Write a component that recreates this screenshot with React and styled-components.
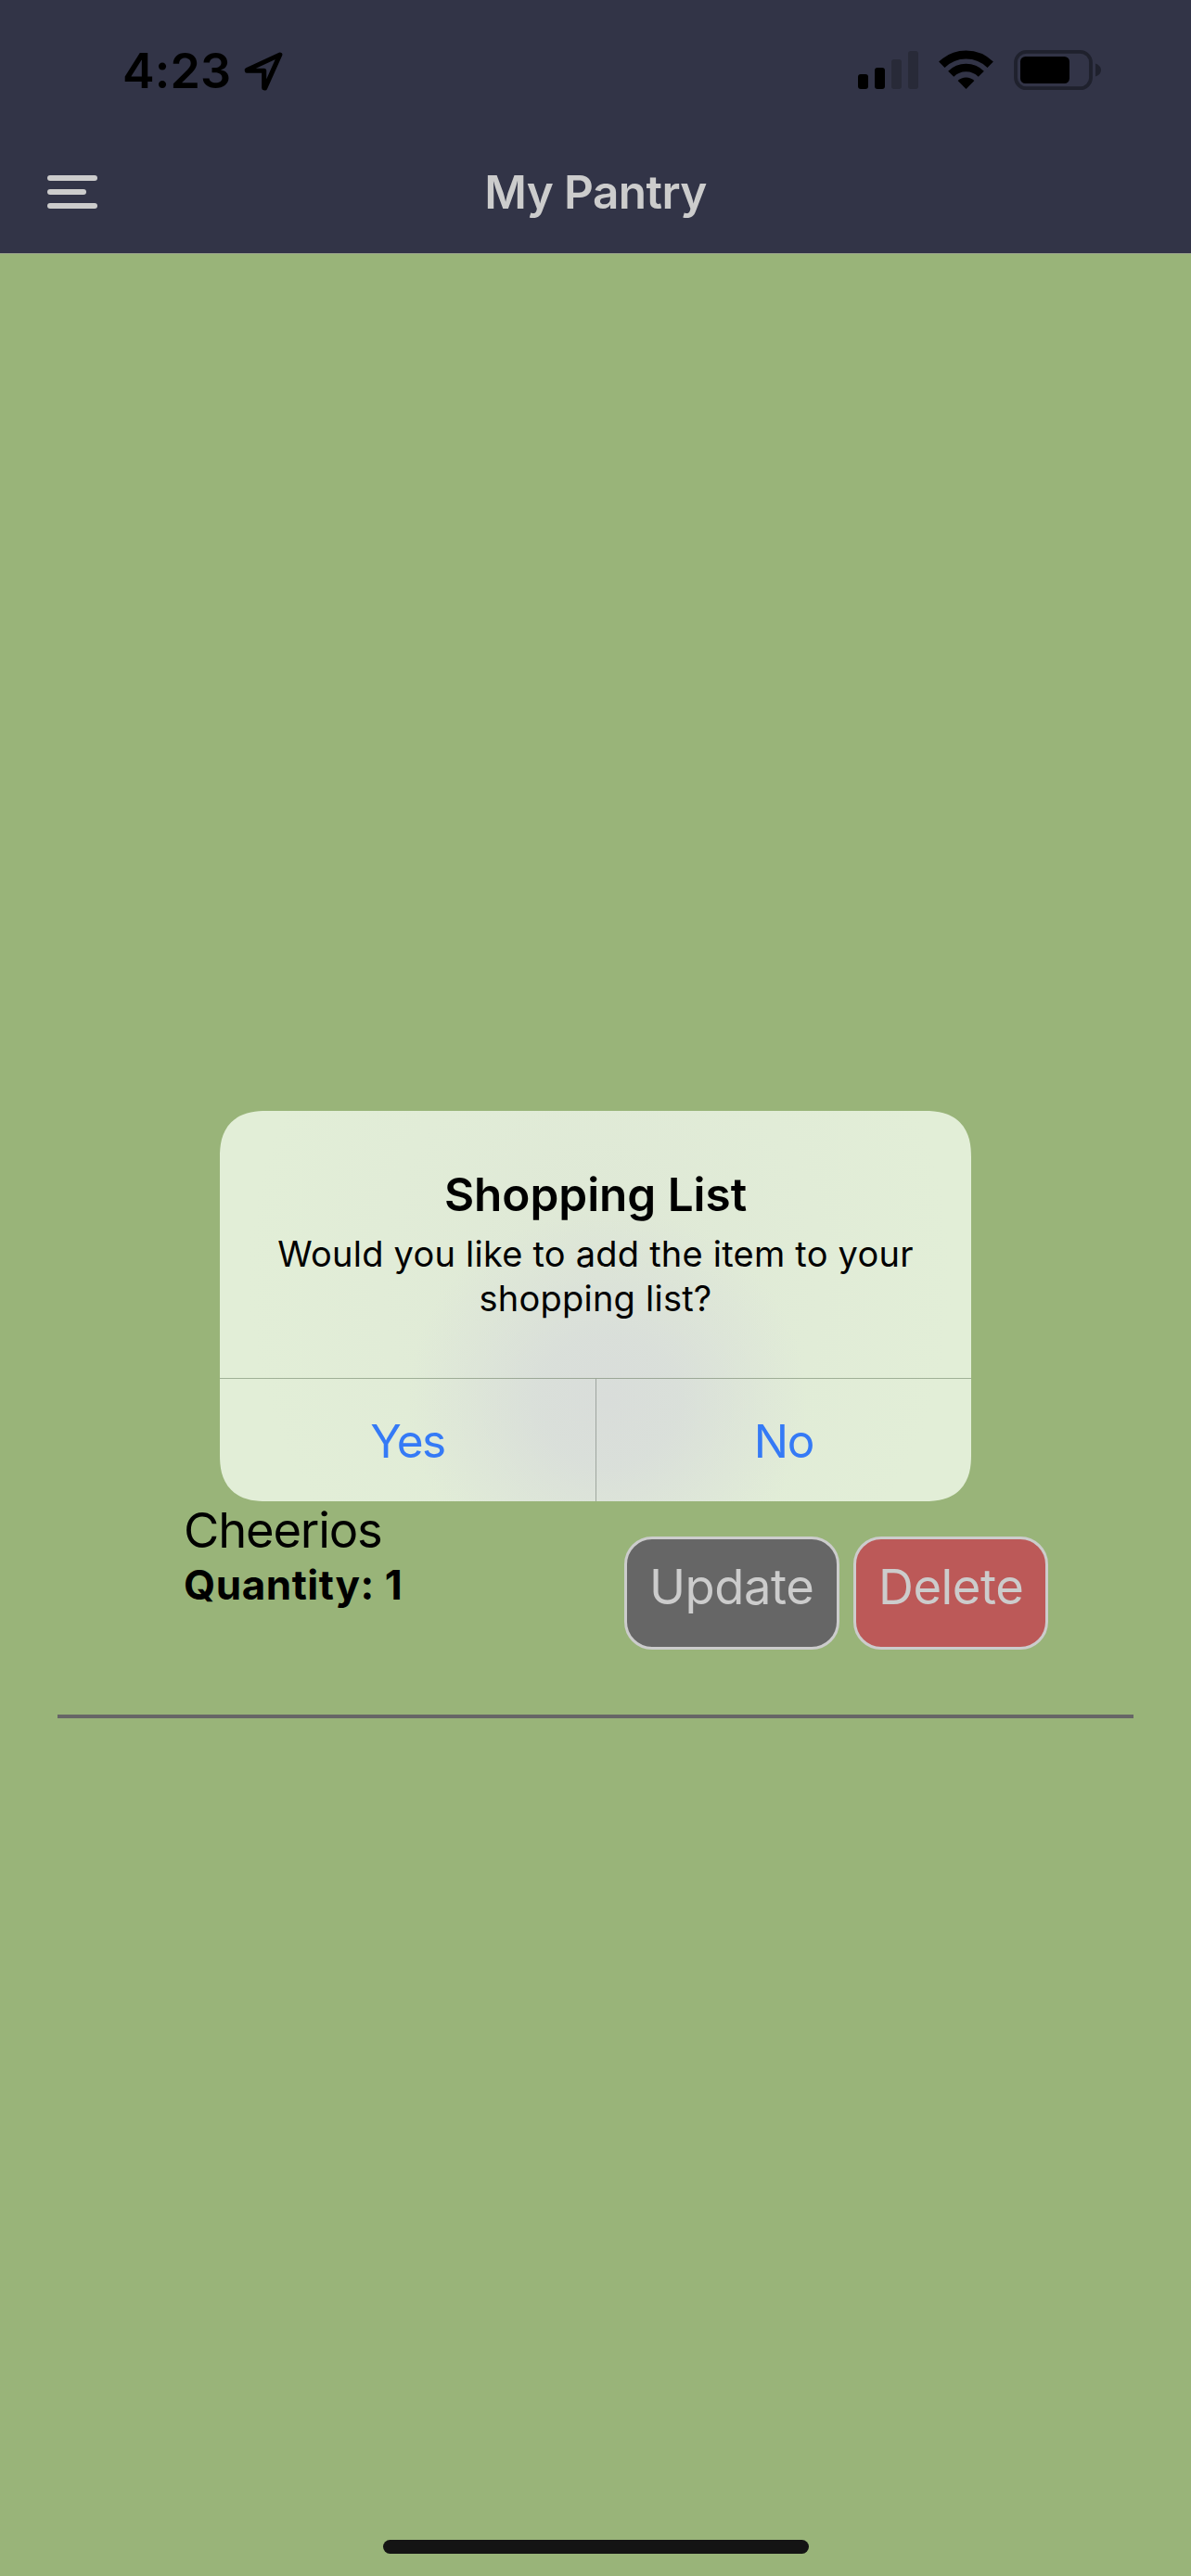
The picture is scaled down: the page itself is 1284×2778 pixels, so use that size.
import React from "react";
import styled, { createGlobalStyle } from "styled-components";

const GlobalStyle = createGlobalStyle`
  * { box-sizing: border-box; }
  body {
    margin: 0;
    background: #99b479;
    font-family: Inter, "Liberation Sans", sans-serif;
    color: #000;
  }
`;

const Screen = styled.div`
  position: relative;
  display: flex;
  flex-direction: column;
  width: 1284px;
  height: 2778px;
  overflow: hidden;
  background: #99b479;
`;

const TopArea = styled.header`
  background: #323447;
  border-bottom: 1px solid #9ca68d;
`;

const StatusBar = styled.div`
  display: flex;
  align-items: center;
  justify-content: space-between;
  height: 141px;
  padding: 13px 96px 0 132px;
`;

const StatusGroup = styled.div`
  display: flex;
  align-items: center;
  gap: ${(p) => p.$gap}px;
`;

const Clock = styled.time`
  width: 118px;
  font-size: 52px;
  font-weight: 600;
  line-height: 46px;
  letter-spacing: 0.1px;
  white-space: nowrap;
`;

const NavBar = styled.nav`
  display: grid;
  grid-template-columns: 1fr auto 1fr;
  align-items: center;
  height: 132px;
  padding: 0 51px;
`;

const MenuButton = styled.button`
  display: flex;
  width: 54px;
  height: 36px;
  padding: 0;
  border: 0;
  background: none;
  color: #ccc;
`;

const NavTitle = styled.h1`
  margin: 0;
  color: #ccc;
  font-size: 49.5px;
  font-weight: 600;
  line-height: 60px;
  letter-spacing: -0.6px;
`;

const PantryList = styled.main`
  flex: 1;
  padding: 1344px 62px 0;
`;

const PantryItem = styled.article`
  display: flex;
  justify-content: space-between;
  padding: 0 92px 70px 136px;
  border-bottom: 4px solid #666;
`;

const ItemName = styled.div`
  font-size: 52.5px;
  line-height: 64px;
  letter-spacing: -1.2px;
`;

const ItemQuantity = styled.div`
  font-size: 44px;
  font-weight: 700;
  line-height: 54px;
  letter-spacing: 0.54px;
`;

const Actions = styled.div`
  display: flex;
  gap: 15px;
  padding-top: 39px;
`;

const ActionButton = styled.button`
  width: ${(p) => p.$width}px;
  height: 122px;
  padding: 0 0 14px 24px;
  border: 3px solid #ccc;
  border-radius: 30px;
  background: ${(p) => p.$color};
  color: #ccc;
  font-family: inherit;
  font-size: 52.5px;
  line-height: 54px;
  letter-spacing: -0.45px;
  text-align: left;
`;

const HomeArea = styled.footer`
  display: flex;
  justify-content: center;
  padding: 0 0 24px 1px;
`;

const HomeIndicator = styled.div`
  width: 459px;
  height: 15px;
  border-radius: 8px;
  background: #141414;
`;

const Overlay = styled.div`
  position: absolute;
  inset: 0;
  display: flex;
  align-items: flex-start;
  justify-content: center;
  padding-top: 1198px;
`;

const Dialog = styled.section`
  width: 810px;
  height: 421px;
  overflow: hidden;
  border-radius: 42px;
  background:
    radial-gradient(ellipse 215px 205px at 418px 312px, #d9ddda 0%, rgba(217, 222, 218, 0.9) 35%, rgba(217, 222, 218, 0.45) 65%, rgba(217, 222, 218, 0) 100%),
    radial-gradient(ellipse 380px 420px at 410px 180px, #dee7d6 0%, rgba(224, 234, 215, 0.6) 55%, rgba(226, 238, 216, 0) 100%),
    #e2eed7;

  @supports (corner-shape: superellipse(1.3)) {
    border-radius: 50px;
    corner-shape: superellipse(1.3);
  }
`;

const DialogBody = styled.div`
  height: 288px;
  padding: 60px 48px 0;
  text-align: center;
`;

const DialogTitle = styled.h2`
  margin: 0 0 10px;
  font-size: 49.5px;
  font-weight: 600;
  line-height: 60px;
  letter-spacing: -0.04px;
`;

const DialogMessage = styled.p`
  margin: 0;
  font-size: 38px;
  line-height: 48px;
  letter-spacing: 0.23px;
`;

const DialogActions = styled.div`
  display: grid;
  grid-template-columns: 405px 1fr;
  height: 133px;
  border-top: 1px solid rgba(70, 90, 60, 0.42);
`;

const DialogButton = styled.button`
  padding: 2px 0 0;
  border: 0;
  border-left: ${(p) => (p.$divided ? "1px solid rgba(70, 80, 70, 0.4)" : "0")};
  background: none;
  color: #357af6;
  font-family: inherit;
  font-size: 49.5px;
  line-height: 60px;
  letter-spacing: ${(p) => p.$tracking}px;
`;

const LocationIcon = () => (
  <svg width="48" height="46" viewBox="0 0 48 46" fill="none">
    <path d="M41.8 5 6.200 21.500 6.400 22.300H24.700V40.800L25.700 41Z" stroke="#000" strokeWidth="5.1" strokeLinejoin="round" />
  </svg>
);

const SignalIcon = () => (
  <svg width="65" height="46" viewBox="0 0 65 46">
    <rect x="0" y="26" width="11" height="16" rx="3" />
    <rect x="18" y="19" width="11" height="23" rx="3" />
    <rect x="36" y="10" width="11" height="32" rx="3" fill="#282a38" />
    <rect x="54" y="1" width="11" height="41" rx="3" fill="#282a38" />
  </svg>
);

const WifiIcon = () => (
  <svg width="59" height="46" viewBox="0 0 59 46" fill="none" stroke="#000">
    <path d="M3.3 15.8A37 37 0 0 1 55.7 15.8" strokeWidth="9" />
    <path d="M13.2 25.7A23 23 0 0 1 45.8 25.7" strokeWidth="8.6" />
    <path d="M29.5 42 20.6 33.1A12.8 12.8 0 0 1 38.4 33.1Z" fill="#000" stroke="none" />
  </svg>
);

const BatteryIcon = () => (
  <svg width="95" height="46" viewBox="0 0 95 46">
    <rect x="2" y="1.9" width="81" height="39.3" rx="11.5" fill="none" stroke="#1f212d" strokeWidth="3.8" />
    <rect x="7" y="7" width="53" height="29" rx="5.5" />
    <path d="M88 14.5C92 16 94 18.4 94 21.6S92 27.2 88 28.6Z" fill="#1f212d" />
  </svg>
);

const MenuIcon = () => (
  <svg width="54" height="36" viewBox="0 0 54 36" fill="currentColor">
    <rect width="54" height="6" rx="3" />
    <rect y="15" width="42" height="6" rx="3" />
    <rect y="30" width="54" height="6" rx="3" />
  </svg>
);

export default function App() {
  return (
    <>
      <GlobalStyle />
      <Screen>
        <TopArea>
          <StatusBar>
            <StatusGroup $gap={10}>
              <Clock>4:23</Clock>
              <LocationIcon />
            </StatusGroup>
            <StatusGroup $gap={22}>
              <SignalIcon />
              <WifiIcon />
              <BatteryIcon />
            </StatusGroup>
          </StatusBar>
          <NavBar>
            <MenuButton aria-label="Menu">
              <MenuIcon />
            </MenuButton>
            <NavTitle>My Pantry</NavTitle>
          </NavBar>
        </TopArea>

        <PantryList>
          <PantryItem>
            <div>
              <ItemName>Cheerios</ItemName>
              <ItemQuantity>Quantity: 1</ItemQuantity>
            </div>
            <Actions>
              <ActionButton $width={232} $color="#666">Update</ActionButton>
              <ActionButton $width={210} $color="#bc5958">Delete</ActionButton>
            </Actions>
          </PantryItem>
        </PantryList>

        <HomeArea>
          <HomeIndicator />
        </HomeArea>

        <Overlay>
          <Dialog role="alertdialog">
            <DialogBody>
              <DialogTitle>Shopping List</DialogTitle>
              <DialogMessage>Would you like to add the item to your shopping list?</DialogMessage>
            </DialogBody>
            <DialogActions>
              <DialogButton $tracking={-1.5}>Yes</DialogButton>
              <DialogButton $tracking={-1.29} $divided>No</DialogButton>
            </DialogActions>
          </Dialog>
        </Overlay>
      </Screen>
    </>
  );
}
